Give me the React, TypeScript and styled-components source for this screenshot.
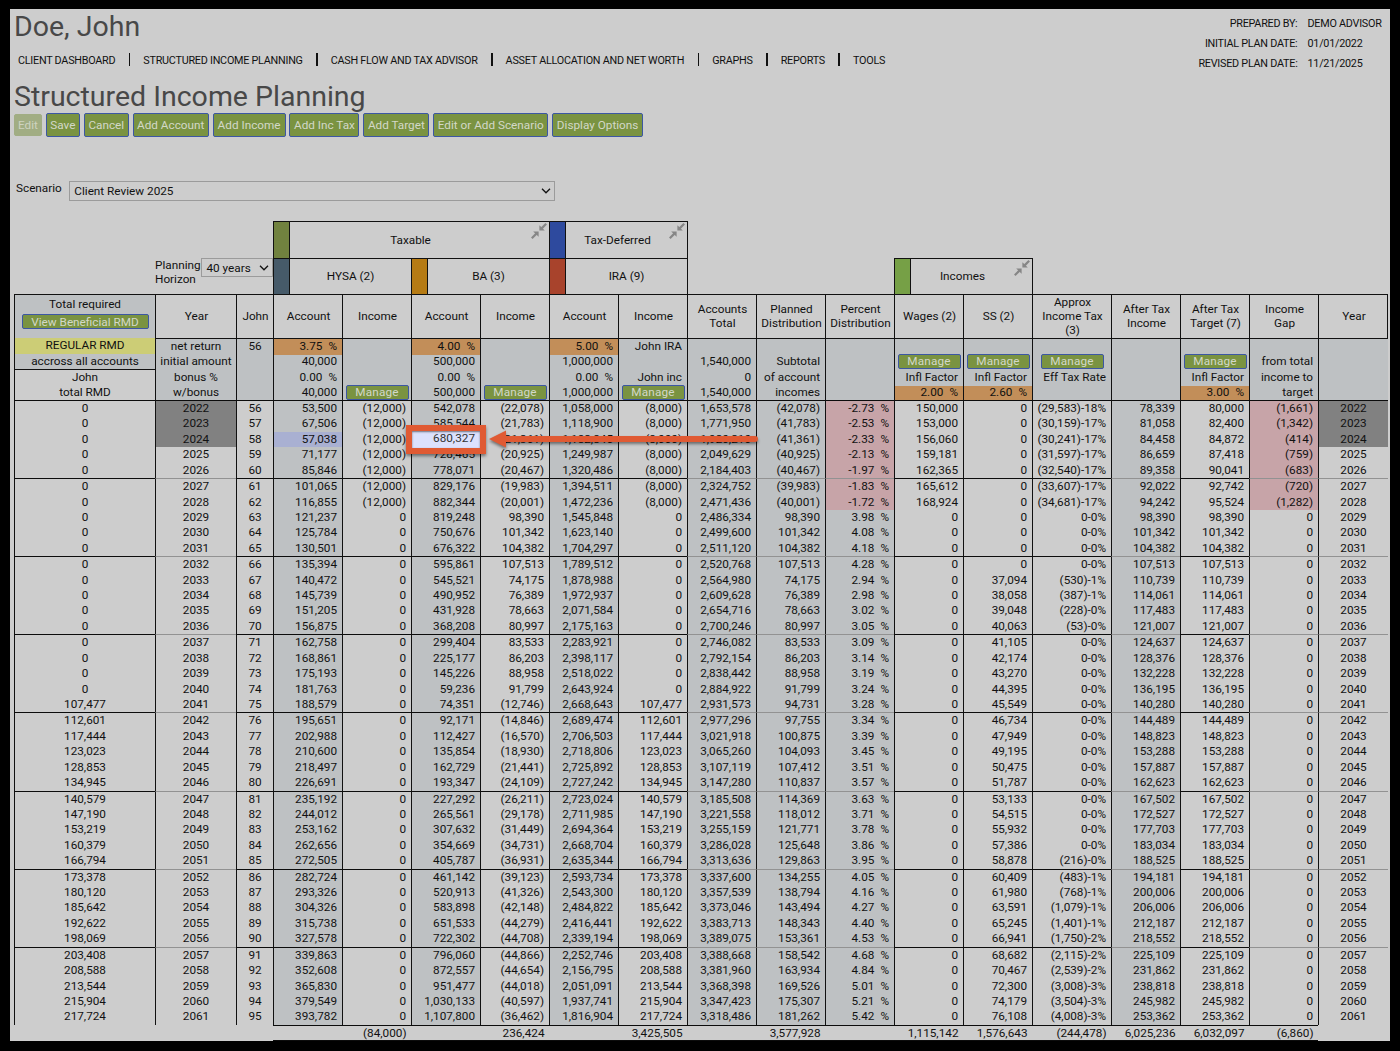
import React from 'react';
import styled, { createGlobalStyle, css } from 'styled-components';

const navItems = [
  'CLIENT DASHBOARD',
  'STRUCTURED INCOME PLANNING',
  'CASH FLOW AND TAX ADVISOR',
  'ASSET ALLOCATION AND NET WORTH',
  'GRAPHS',
  'REPORTS',
  'TOOLS',
];

const actions = [
  { label: 'Save', width: 34 },
  { label: 'Cancel', width: 45 },
  { label: 'Add Account', width: 76 },
  { label: 'Add Income', width: 73 },
  { label: 'Add Inc Tax', width: 70 },
  { label: 'Add Target', width: 66 },
  { label: 'Edit or Add Scenario', width: 115 },
  { label: 'Display Options', width: 91 },
];

const headings = [
  'Year',
  'John',
  'Account',
  'Income',
  'Account',
  'Income',
  'Account',
  'Income',
  'Accounts\nTotal',
  'Planned\nDistribution',
  'Percent\nDistribution',
  'Wages (2)',
  'SS (2)',
  'Approx\nIncome Tax\n(3)',
  'After Tax\nIncome',
  'After Tax\nTarget (7)',
  'Income\nGap',
  'Year',
];

// four stacked lines per column; "*" is a Manage button, "!" marks an editable rate
const setup: string[][] = [
  ['net return', 'initial amount', 'bonus %', 'w/bonus'],
  ['56', '', '', ''],
  ['!3.75 %', '40,000', '0.00 %', '40,000'],
  ['', '', '', '*'],
  ['!4.00 %', '500,000', '0.00 %', '500,000'],
  ['', '', '', '*'],
  ['!5.00 %', '1,000,000', '0.00 %', '1,000,000'],
  ['John IRA', '', 'John inc', '*'],
  ['', '1,540,000', '0', '1,540,000'],
  ['', 'Subtotal', 'of account', 'incomes'],
  ['', '', '', ''],
  ['', '*', 'Infl Factor', '!2.00 %'],
  ['', '*', 'Infl Factor', '!2.60 %'],
  ['', '*', 'Eff Tax Rate', ''],
  ['', '', '', ''],
  ['', '*', 'Infl Factor', '!3.00 %'],
  ['', 'from total', 'income to', 'target'],
  ['', '', '', ''],
];

// rmd, year, age, hysa, income, ba, income, ira, income, total, planned, percent, wages, ss, tax, after tax, target, gap
const plan = `
0 2022 56 53,500 (12,000) 542,078 (22,078) 1,058,000 (8,000) 1,653,578 (42,078) -2.73 150,000 0 (29,583)-18% 78,339 80,000 (1,661)
0 2023 57 67,506 (12,000) 585,544 (21,783) 1,118,900 (8,000) 1,771,950 (41,783) -2.53 153,000 0 (30,159)-17% 81,058 82,400 (1,342)
0 2024 58 57,038 (12,000) 680,327 (21,361) 1,182,845 (8,000) 1,920,210 (41,361) -2.33 156,060 0 (30,241)-17% 84,458 84,872 (414)
0 2025 59 71,177 (12,000) 728,465 (20,925) 1,249,987 (8,000) 2,049,629 (40,925) -2.13 159,181 0 (31,597)-17% 86,659 87,418 (759)
0 2026 60 85,846 (12,000) 778,071 (20,467) 1,320,486 (8,000) 2,184,403 (40,467) -1.97 162,365 0 (32,540)-17% 89,358 90,041 (683)
0 2027 61 101,065 (12,000) 829,176 (19,983) 1,394,511 (8,000) 2,324,752 (39,983) -1.83 165,612 0 (33,607)-17% 92,022 92,742 (720)
0 2028 62 116,855 (12,000) 882,344 (20,001) 1,472,236 (8,000) 2,471,436 (40,001) -1.72 168,924 0 (34,681)-17% 94,242 95,524 (1,282)
0 2029 63 121,237 0 819,248 98,390 1,545,848 0 2,486,334 98,390 3.98 0 0 0-0% 98,390 98,390 0
0 2030 64 125,784 0 750,676 101,342 1,623,140 0 2,499,600 101,342 4.08 0 0 0-0% 101,342 101,342 0
0 2031 65 130,501 0 676,322 104,382 1,704,297 0 2,511,120 104,382 4.18 0 0 0-0% 104,382 104,382 0
0 2032 66 135,394 0 595,861 107,513 1,789,512 0 2,520,768 107,513 4.28 0 0 0-0% 107,513 107,513 0
0 2033 67 140,472 0 545,521 74,175 1,878,988 0 2,564,980 74,175 2.94 0 37,094 (530)-1% 110,739 110,739 0
0 2034 68 145,739 0 490,952 76,389 1,972,937 0 2,609,628 76,389 2.98 0 38,058 (387)-1% 114,061 114,061 0
0 2035 69 151,205 0 431,928 78,663 2,071,584 0 2,654,716 78,663 3.02 0 39,048 (228)-0% 117,483 117,483 0
0 2036 70 156,875 0 368,208 80,997 2,175,163 0 2,700,246 80,997 3.05 0 40,063 (53)-0% 121,007 121,007 0
0 2037 71 162,758 0 299,404 83,533 2,283,921 0 2,746,082 83,533 3.09 0 41,105 0-0% 124,637 124,637 0
0 2038 72 168,861 0 225,177 86,203 2,398,117 0 2,792,154 86,203 3.14 0 42,174 0-0% 128,376 128,376 0
0 2039 73 175,193 0 145,226 88,958 2,518,022 0 2,838,442 88,958 3.19 0 43,270 0-0% 132,228 132,228 0
0 2040 74 181,763 0 59,236 91,799 2,643,924 0 2,884,922 91,799 3.24 0 44,395 0-0% 136,195 136,195 0
107,477 2041 75 188,579 0 74,351 (12,746) 2,668,643 107,477 2,931,573 94,731 3.28 0 45,549 0-0% 140,280 140,280 0
112,601 2042 76 195,651 0 92,171 (14,846) 2,689,474 112,601 2,977,296 97,755 3.34 0 46,734 0-0% 144,489 144,489 0
117,444 2043 77 202,988 0 112,427 (16,570) 2,706,503 117,444 3,021,918 100,875 3.39 0 47,949 0-0% 148,823 148,823 0
123,023 2044 78 210,600 0 135,854 (18,930) 2,718,806 123,023 3,065,260 104,093 3.45 0 49,195 0-0% 153,288 153,288 0
128,853 2045 79 218,497 0 162,729 (21,441) 2,725,892 128,853 3,107,119 107,412 3.51 0 50,475 0-0% 157,887 157,887 0
134,945 2046 80 226,691 0 193,347 (24,109) 2,727,242 134,945 3,147,280 110,837 3.57 0 51,787 0-0% 162,623 162,623 0
140,579 2047 81 235,192 0 227,292 (26,211) 2,723,024 140,579 3,185,508 114,369 3.63 0 53,133 0-0% 167,502 167,502 0
147,190 2048 82 244,012 0 265,561 (29,178) 2,711,985 147,190 3,221,558 118,012 3.71 0 54,515 0-0% 172,527 172,527 0
153,219 2049 83 253,162 0 307,632 (31,449) 2,694,364 153,219 3,255,159 121,771 3.78 0 55,932 0-0% 177,703 177,703 0
160,379 2050 84 262,656 0 354,669 (34,731) 2,668,704 160,379 3,286,028 125,648 3.86 0 57,386 0-0% 183,034 183,034 0
166,794 2051 85 272,505 0 405,787 (36,931) 2,635,344 166,794 3,313,636 129,863 3.95 0 58,878 (216)-0% 188,525 188,525 0
173,378 2052 86 282,724 0 461,142 (39,123) 2,593,734 173,378 3,337,600 134,255 4.05 0 60,409 (483)-1% 194,181 194,181 0
180,120 2053 87 293,326 0 520,913 (41,326) 2,543,300 180,120 3,357,539 138,794 4.16 0 61,980 (768)-1% 200,006 200,006 0
185,642 2054 88 304,326 0 583,898 (42,148) 2,484,822 185,642 3,373,046 143,494 4.27 0 63,591 (1,079)-1% 206,006 206,006 0
192,622 2055 89 315,738 0 651,533 (44,279) 2,416,441 192,622 3,383,713 148,343 4.40 0 65,245 (1,401)-1% 212,187 212,187 0
198,069 2056 90 327,578 0 722,302 (44,708) 2,339,194 198,069 3,389,075 153,361 4.53 0 66,941 (1,750)-2% 218,552 218,552 0
203,408 2057 91 339,863 0 796,060 (44,866) 2,252,746 203,408 3,388,668 158,542 4.68 0 68,682 (2,115)-2% 225,109 225,109 0
208,588 2058 92 352,608 0 872,557 (44,654) 2,156,795 208,588 3,381,960 163,934 4.84 0 70,467 (2,539)-2% 231,862 231,862 0
213,544 2059 93 365,830 0 951,477 (44,018) 2,051,091 213,544 3,368,398 169,526 5.01 0 72,300 (3,008)-3% 238,818 238,818 0
215,904 2060 94 379,549 0 1,030,133 (40,597) 1,937,741 215,904 3,347,423 175,307 5.21 0 74,179 (3,504)-3% 245,982 245,982 0
217,724 2061 95 393,782 0 1,107,800 (36,462) 1,816,904 217,724 3,318,486 181,262 5.42 0 76,108 (4,008)-3% 253,362 253,362 0`
  .trim()
  .split('\n')
  .map(line => {
    const values = line.split(' ');
    return [...values, values[1]];
  });

const totals = ['', '(84,000)', '', '236,424', '', '3,425,505', '', '3,577,928', '', '1,115,142', '1,576,643', '(244,478)', '6,025,236', '6,032,097', '(6,860)'];

const groups = Array.from({ length: 8 }, (_, i) => plan.slice(i * 5, i * 5 + 5));

const centered = [0, 1, 2, 18];
const shaded = [3, 5, 7, 9, 10, 11, 15];
const softRule = [1, 9, 10, 11, 15, 17, 18];

const colors = {
  page: '#cdcdcd',
  shade: '#bec1c3',
  rate: '#c28e59',
  negative: '#c7a4a8',
  past: '#818181',
  override: '#a9b0d2',
  mark: '#e05a33',
};

const cellFill = (col: number, row: string[]) => {
  if ((col === 1 || col === 18) && Number(row[1]) < 2025) return colors.past;
  if (col === 3 && row[1] === '2024') return colors.override;
  if (col === 11 && row[11].startsWith('-')) return colors.negative;
  if (col === 17 && row[17] !== '0') return colors.negative;
  return shaded.includes(col) ? colors.shade : colors.page;
};

const Percent: React.FC<{ value: string }> = ({ value }) => (
  <>
    {value}
    <PercentSign>%</PercentSign>
  </>
);

const Chevron: React.FC = () => (
  <svg width="10" height="6" viewBox="0 0 10 6" fill="none" stroke="#111" strokeWidth="1.3">
    <path d="M1 0.8 L5 4.8 L9 0.8" />
  </svg>
);

const CollapseIcon: React.FC = () => (
  <Collapse width="16" height="16" viewBox="0 0 16 16" fill="#868686" stroke="#868686">
    <path d="M0.8 15.2 L5.4 10.6 M15.2 0.8 L10.6 5.4" strokeWidth="2.2" fill="none" />
    <path d="M2.2 8.4 H7.6 V13.8 Z" stroke="none" />
    <path d="M8.4 2.2 V7.6 H13.8 Z" stroke="none" />
  </Collapse>
);

const SetupLine: React.FC<{ text: string; center: boolean }> = ({ text, center }) => {
  if (text === '*') {
    return (
      <Line $center>
        <ManageButton>Manage</ManageButton>
      </Line>
    );
  }
  const rate = text.startsWith('!');
  const value = text.replace('!', '');
  return (
    <Line $center={center} $rate={rate}>
      {/^\d.*%$/.test(value) ? <Percent value={value.replace(' %', '')} /> : value}
    </Line>
  );
};

const Callout: React.FC<{ value: string }> = ({ value }) => (
  <>
    <CalloutBox>{value}</CalloutBox>
    <CalloutArrow width="274" height="26" viewBox="0 0 274 26">
      <path d="M1 9 L18 0.5 V6 H267 A3 3 0 0 1 267 12 H18 V17.5 Z" fill={colors.mark} />
    </CalloutArrow>
  </>
);

const App: React.FC = () => {
  return (
    <>
      <GlobalStyle />
      <Panel>
        <TopBar>
          <Title>Doe, John</Title>
          <Meta>
            <span>PREPARED BY:</span>
            <span>DEMO ADVISOR</span>
            <span>INITIAL PLAN DATE:</span>
            <span>01/01/2022</span>
            <span>REVISED PLAN DATE:</span>
            <span>11/21/2025</span>
          </Meta>
        </TopBar>
        <Nav>
          {navItems.map(item => (
            <NavItem key={item}>{item}</NavItem>
          ))}
        </Nav>
        <Title as="h2">Structured Income Planning</Title>
        <Toolbar>
          <ActionButton $width={28} disabled>Edit</ActionButton>
          {actions.map(action => (
            <ActionButton key={action.label} $width={action.width}>{action.label}</ActionButton>
          ))}
        </Toolbar>
        <ScenarioRow>
          <span>Scenario</span>
          <SelectBox $width={486} $height={20}>
            Client Review 2025
            <Chevron />
          </SelectBox>
        </ScenarioRow>

        <Sheet>
          <GroupGrid>
            <Horizon>
              <span>Planning Horizon</span>
              <SelectBox $width={72} $height={19}>
                40 years
                <Chevron />
              </SelectBox>
            </Horizon>
            <Group $from={4} $to={8} $row={1}>
              <Swatch $color="#71823f" />
              <GroupName>Taxable</GroupName>
              <CollapseIcon />
            </Group>
            <Group $from={8} $to={10} $row={1}>
              <Swatch $color="#2e4a9e" />
              <GroupName>Tax-Deferred</GroupName>
              <CollapseIcon />
            </Group>
            <Group $from={4} $to={6} $row={2}>
              <Swatch $color="#465a69" />
              <GroupName>HYSA (2)</GroupName>
            </Group>
            <Group $from={6} $to={8} $row={2}>
              <Swatch $color="#b67b14" />
              <GroupName>BA (3)</GroupName>
            </Group>
            <Group $from={8} $to={10} $row={2}>
              <Swatch $color="#a8432c" />
              <GroupName>IRA (9)</GroupName>
            </Group>
            <Group $from={13} $to={15} $row={2}>
              <Swatch $color="#76a046" />
              <GroupName>Incomes</GroupName>
              <CollapseIcon />
            </Group>
          </GroupGrid>

          <HeadGrid>
            <RequiredCell>
              <RequiredTop>
                Total required
                <RmdButton>View Beneficial RMD</RmdButton>
              </RequiredTop>
              <Regular>REGULAR RMD</Regular>
              <Line $center>accross all accounts</Line>
              <RequiredOwner>
                <Line $center>John</Line>
                <Line $center>total RMD</Line>
              </RequiredOwner>
            </RequiredCell>
            {headings.map((heading, i) => (
              <HeadCell key={i}>{heading}</HeadCell>
            ))}
            {setup.map((lines, i) => (
              <SetupCell key={i}>
                {lines.map((text, j) => (
                  <SetupLine key={j} text={text} center={i < 2} />
                ))}
              </SetupCell>
            ))}
          </HeadGrid>

          {groups.map((rows, g) => (
            <YearGroup key={g}>
              {rows.map((row, r) =>
                row.map((value, col) => (
                  <Cell
                    key={`${row[1]}-${col}`}
                    $center={centered.includes(col)}
                    $fill={cellFill(col, row)}
                    $rule={r > 0 ? undefined : g > 0 && softRule.includes(col) ? '#929292' : '#0c0c0c'}
                  >
                    {col === 11 ? <Percent value={value} /> : value}
                    {col === 5 && row[1] === '2024' && <Callout value={value} />}
                  </Cell>
                ))
              )}
            </YearGroup>
          ))}

          <TotalsRow>
            {totals.map((total, i) => (
              <Total key={i}>{total}</Total>
            ))}
          </TotalsRow>
        </Sheet>
      </Panel>
    </>
  );
};

export default App;

const GlobalStyle = createGlobalStyle`
  * {
    box-sizing: border-box;
  }

  body {
    margin: 0;
    padding: 9px 9px 10px 10px;
    height: 1051px;
    background: #000;
    color: #111;
    font-family: Roboto, sans-serif;
    font-size: 11.75px;
    overflow: hidden;
  }
`;

const columns = css`
  display: grid;
  grid-template-columns: 141px 81px 37px repeat(11, 69px) 79px repeat(3, 69px) 70px;
`;

const Panel = styled.div`
  width: 1380px;
  height: 1032px;
  padding-left: 4px;
  background: ${colors.page};
`;

const TopBar = styled.header`
  display: flex;
  justify-content: space-between;
  height: 41px;
`;

const Title = styled.h1`
  margin: 0;
  height: 34px;
  line-height: 35px;
  font-size: 28.5px;
  font-weight: 400;
  color: #484848;
`;

const Meta = styled.div`
  display: grid;
  grid-template-columns: auto 74px;
  grid-auto-rows: 19.9px;
  column-gap: 10px;
  margin: 5px 8.5px 0 0;
  font-size: 10.8px;
  letter-spacing: -0.25px;
  line-height: 19.9px;
  white-space: nowrap;

  span:nth-child(odd) {
    text-align: right;
  }
`;

const Nav = styled.nav`
  display: flex;
  align-items: center;
  height: 20px;
  margin: 0 0 9px 4px;
  font-size: 10.8px;
  letter-spacing: -0.25px;
`;

const NavItem = styled.span`
  display: flex;
  align-items: center;
  white-space: nowrap;

  & + &::before {
    content: '';
    width: 1.5px;
    height: 13px;
    margin: 0 13px 0 13.5px;
    position: relative;
    top: -1px;
    background: #111;
  }
`;

const Toolbar = styled.div`
  display: flex;
  gap: 3.9px;
  height: 24px;
`;

const greenButton = css`
  display: flex;
  align-items: center;
  justify-content: center;
  padding: 0;
  background: #7a9341;
  border: 1px solid #3c57a3;
  border-radius: 2px;
  color: #d3d8c8;
  font-family: inherit;
  font-size: 11.75px;
  white-space: nowrap;
`;

const ActionButton = styled.button<{ $width: number }>`
  ${greenButton}
  width: ${p => p.$width}px;
  height: 24px;

  &:disabled {
    height: 22px;
    margin-top: 1px;
    background: #a1ad83;
    border-color: #a1ad83;
    color: #ced3c0;
  }
`;

const ScenarioRow = styled.div`
  display: flex;
  gap: 7px;
  height: 20px;
  margin: 44px 0 20px 2px;
  line-height: 15px;
`;

const SelectBox = styled.div<{ $width: number; $height: number }>`
  display: flex;
  align-items: center;
  justify-content: space-between;
  flex: none;
  width: ${p => p.$width}px;
  height: ${p => p.$height}px;
  padding: 0 3px 0 4.5px;
  border: 1px solid #9b9b9b;
`;

const Sheet = styled.main`
  width: 1374px;
`;

const GroupGrid = styled.div`
  ${columns}
  grid-template-rows: 37px 36px;
`;

const Horizon = styled.div`
  grid-column: 2 / 4;
  grid-row: 2;
  display: flex;
  line-height: 14px;

  span {
    width: 46px;
  }
`;

const Group = styled.div<{ $from: number; $to: number; $row: number }>`
  grid-column: ${p => p.$from} / ${p => p.$to};
  grid-row: ${p => p.$row};
  display: flex;
  margin-right: -1px;
  border: 1px solid #111;
  border-bottom: none;
`;

const Swatch = styled.div<{ $color: string }>`
  width: 16px;
  background: ${p => p.$color};
  border-right: 1px solid #111;
`;

const GroupName = styled.div`
  flex: 1;
  display: flex;
  align-items: center;
  justify-content: center;
  padding-bottom: 1px;
`;

const Collapse = styled.svg`
  margin: 1px 2px 0 0;
`;

const HeadGrid = styled.div`
  ${columns}
  grid-template-rows: 43px 63px;
  border-top: 1px solid #111;
  border-right: 1px solid #111;
  height: 106px;
`;

const RequiredCell = styled.div`
  grid-row: 1 / 3;
  display: flex;
  flex-direction: column;
  border-left: 1px solid #111;
  background: ${colors.shade};
`;

const RequiredTop = styled.div`
  display: flex;
  flex-direction: column;
  align-items: center;
  height: 43px;
  padding-top: 2px;
  line-height: 15px;
`;

const RmdButton = styled.button`
  ${greenButton}
  width: 127px;
  height: 15px;
  margin-top: 2px;
`;

const Line = styled.div<{ $center?: boolean; $rate?: boolean }>`
  display: flex;
  align-items: center;
  justify-content: ${p => (p.$center ? 'center' : 'flex-end')};
  height: 15.5px;
  padding: ${p => (p.$center ? '0' : '0 5px')};
  background: ${p => (p.$rate ? colors.rate : 'transparent')};
  white-space: nowrap;
`;

const Regular = styled(Line).attrs({ $center: true })`
  padding-bottom: 1px;
  background: #cccd76;
`;

const RequiredOwner = styled.div`
  flex: 1;
  border-top: 1px solid #111;
  background: ${colors.page};

  ${Line} {
    padding-bottom: 2px;
  }
`;

const HeadCell = styled.div`
  display: flex;
  align-items: center;
  justify-content: center;
  padding: 0 0 1px 1px;
  border-left: 1px solid #111;
  text-align: center;
  white-space: pre;
  line-height: 14px;
`;

const SetupCell = styled.div`
  border-left: 1px solid #111;
  border-top: 1px solid #111;
  background: ${colors.shade};

  ${Line} {
    padding-bottom: 2px;
  }
`;

const ManageButton = styled.button`
  ${greenButton}
  width: 63px;
  height: 15px;
  flex: none;
  letter-spacing: 0.15px;
`;

const YearGroup = styled.div`
  ${columns}
  grid-template-rows: 16.425px repeat(4, 15.425px);
  border-right: 1px solid #111;
`;

const Cell = styled.div<{ $center: boolean; $fill: string; $rule?: string }>`
  position: relative;
  display: flex;
  align-items: center;
  justify-content: ${p => (p.$center ? 'center' : 'flex-end')};
  padding: ${p => (p.$center ? '0 0 1.5px' : '0 5px 1.5px')};
  border-left: 1px solid #111;
  border-top: ${p => (p.$rule ? `1px solid ${p.$rule}` : 'none')};
  background: ${p => p.$fill};
  white-space: nowrap;
`;

const PercentSign = styled.span`
  margin-left: 6px;
`;

const CalloutBox = styled.div`
  position: absolute;
  z-index: 1;
  top: -7px;
  left: -6px;
  display: flex;
  align-items: center;
  justify-content: flex-end;
  width: 80px;
  height: 29px;
  padding: 0 5px 2px 0;
  border: 6px solid ${colors.mark};
  background: #dce1fd;
  color: #333;
  box-shadow: 0 2px 3px rgba(0, 0, 0, 0.45), inset 0 1px 2px rgba(0, 0, 0, 0.5);
`;

const CalloutArrow = styled.svg`
  position: absolute;
  z-index: 1;
  top: -2px;
  left: 76px;
  filter: drop-shadow(0 2px 1.5px rgba(0, 0, 0, 0.45));
`;

const TotalsRow = styled.footer`
  display: grid;
  grid-template-columns: repeat(11, 69px) 79px repeat(3, 69px);
  width: 1045px;
  height: 16px;
  margin-left: 259px;
  border-top: 1.5px solid #0c0c0c;
  border-bottom: 1px solid #0c0c0c;
`;

const Total = styled.div`
  display: flex;
  align-items: center;
  justify-content: flex-end;
  padding-right: 4.5px;
`;
